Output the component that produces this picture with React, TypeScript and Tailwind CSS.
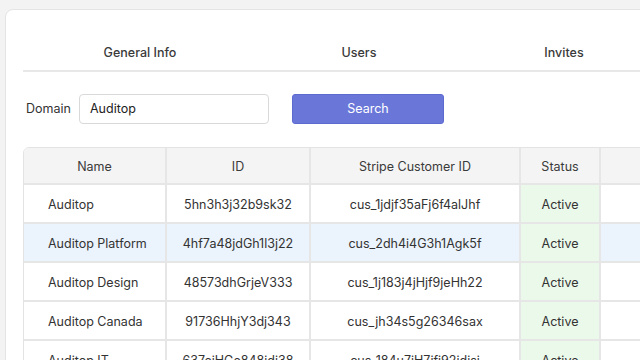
const rows = [
  { name: 'Auditop', id: '5hn3h3j32b9sk32', stripe: 'cus_1jdjf35aFj6f4alJhf', status: 'Active' },
  { name: 'Auditop Platform', id: '4hf7a48jdGh1l3j22', stripe: 'cus_2dh4i4G3h1Agk5f', status: 'Active', selected: true },
  { name: 'Auditop Design', id: '48573dhGrjeV333', stripe: 'cus_1j183j4jHjf9jeHh22', status: 'Active' },
  { name: 'Auditop Canada', id: '91736HhjY3dj343', stripe: 'cus_jh34s5g26346sax', status: 'Active' },
  { name: 'Auditop IT', id: '637ejHGe848idj38', stripe: 'cus_184u7iH7ifi92idisj', status: 'Active' },
];

const cols = 'grid grid-cols-[143px_144px_210px_80px_1fr]';

export default function App() {
  return (
    <div className="w-[640px] h-[360px] overflow-hidden bg-[#f3f3f3] text-[12.5px] text-[#333]" style={{ fontFamily: 'Inter, "Liberation Sans", sans-serif' }}>
      <div className="ml-[5px] mt-[9px] w-[720px] h-[400px] bg-white border border-[#e4e4e4] rounded-lg pl-[17px] pt-[34px]">
        {/* tabs */}
        <div className="flex border-b-2 border-[#e8e8e8] text-[#3a3a3a] font-medium">
          <div className="w-[234px] text-center pb-[8px] leading-[18px]">General Info</div>
          <div className="w-[204px] text-center pb-[8px] leading-[18px]">Users</div>
          <div className="w-[206px] text-center pb-[8px] leading-[18px]">Invites</div>
        </div>

        {/* search */}
        <div className="flex items-center mt-[22px] ml-[3px]">
          <label className="text-[#333] w-[53px] pt-px">Domain</label>
          <div className="w-[190px] h-[30px] border border-[#d9d9d9] rounded-[4px] flex items-center px-[10px] pt-px text-[#222]">Auditop</div>
          <button className="ml-[23px] w-[152px] h-[30px] rounded-[3px] bg-[#6a77d9] border border-[#5d6bd0] pt-px text-white">Search</button>
        </div>

        {/* table */}
        <div className="mt-[23px] border border-[#e3e3e3] rounded-md overflow-hidden">
          <div className={`${cols} h-[37px] bg-[#f4f4f4] border-b-2 border-[#e6e6e6] text-[#3a3a3a]`}>
            <div className="flex items-center justify-center pt-[3px] border-r-2 border-[#e6e6e6]">Name</div>
            <div className="flex items-center justify-center pt-[3px] border-r-2 border-[#e6e6e6]">ID</div>
            <div className="flex items-center justify-center pt-[3px] border-r-2 border-[#e6e6e6]">Stripe Customer ID</div>
            <div className="flex items-center justify-center pt-[3px] border-r-2 border-[#e6e6e6]">Status</div>
            <div></div>
          </div>
          {rows.map((r) => (
            <div key={r.name} className={`${cols} h-[39px] border-b-2 border-[#e6e6e6] ${r.selected ? 'bg-[#ebf3fd]' : 'bg-white'}`}>
              <div className="flex items-center pl-[24px] pt-[3px] border-r-2 border-[#e6e6e6]">{r.name}</div>
              <div className="flex items-center justify-center pt-[3px] border-r-2 border-[#e6e6e6]">{r.id}</div>
              <div className="flex items-center justify-center pt-[3px] border-r-2 border-[#e6e6e6]">{r.stripe}</div>
              <div className="flex items-center justify-center pt-[3px] border-r-2 border-[#e6e6e6] bg-[#ebf9ea]">{r.status}</div>
              <div></div>
            </div>
          ))}
        </div>
      </div>
    </div>
  );
}
